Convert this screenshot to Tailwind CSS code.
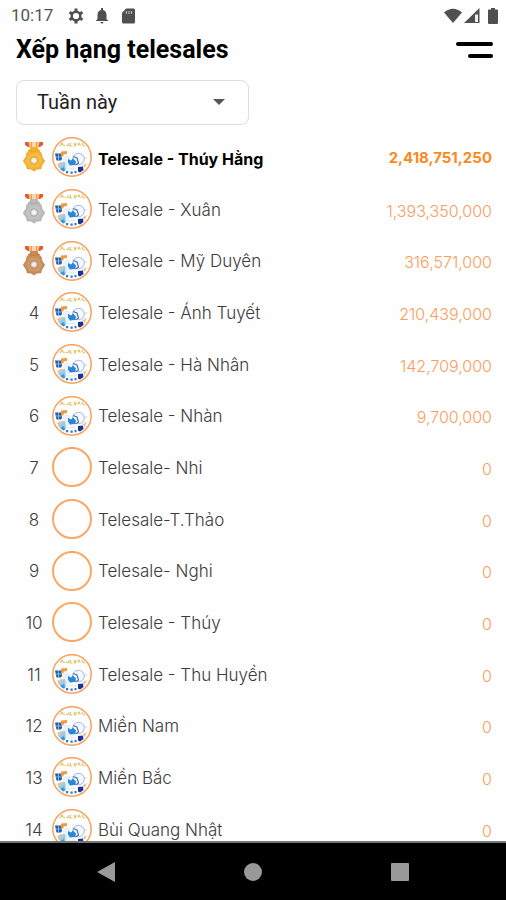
<!DOCTYPE html>
<html lang="vi">
<head>
<meta charset="utf-8">
<meta name="viewport" content="width=device-width, initial-scale=1">
<title>Xếp hạng telesales</title>
<script src="https://cdn.jsdelivr.net/npm/@tailwindcss/browser@4"></script>
</head>
<body class="flex h-screen flex-col overflow-hidden bg-[#fefefe] font-['Inter','Noto_Sans',sans-serif] text-black">

<svg class="hidden" aria-hidden="true">
  <symbol id="avatar" viewBox="0 0 40 40">
    <circle cx="20" cy="20" r="19.2" fill="#fff" stroke="#f9a05c" stroke-width="1.5"/>
    <path d="M8 9l2-3 1 2 2 .5M14 8.500h2l1-2M18.500 6l-.5 3h2.500M22 6l1 3 1.500-3M26 8.500l1-2.500 1.500 2.500M30 6l1 2.500 2 .5" fill="none" stroke="#dfc46a" stroke-width="1.200"/>
    <path d="M3 16.500h7V22l-1 1.500H4.500z" fill="#1c5fae"/>
    <path d="M3.500 20H10M6.500 16.500v7" stroke="#9fcaf0" stroke-width=".8"/>
    <path d="M9 14.500l6-.5v3l-3 .5-1 2H9z" fill="#f59a3c"/>
    <path d="M11 20l4-2 4 2 1 8-5 3-4-3z" fill="#eaf1f9"/>
    <circle cx="26.500" cy="22" r="5.800" fill="#f4f8fd" stroke="#9cb9e2" stroke-width="1"/>
    <path d="M16 22l3 1.500 2-2 3 3-1 3.500-5 .5-2-3z" fill="#2c86d6"/>
    <path d="M21 19.500l4 1.500 1.500 5-3 2" fill="none" stroke="#4a74b3" stroke-width="1.200"/>
    <circle cx="34" cy="21" r=".8" fill="#efb9a5"/>
    <path d="M6 30l1-4 6-1 1 8-3 1z" fill="#8fcdf0"/>
    <path d="M5 27l4-2 3 1-5 4z" fill="#e3c3a6"/>
    <path d="M8 32l4-2 1 4-2 .5z" fill="#3f97d8"/>
    <path d="M26 30l5-.5.5 3.500-3.500 2.500-2-1z" fill="#17359b"/>
    <path d="M31 28l4-2-2.500 5z" fill="#f3b98d"/>
    <path d="M14 34h2.200v2.200H14zM18.500 34.500h2.200v2.200h-2.200zM22.500 34h2v2.200h-2z" fill="#2d78cf"/>
    <path d="M15 30.500h9v2h-9z" fill="#e4eef9"/>
  </symbol>
  <symbol id="medal" viewBox="0 0 24 30">
    <path d="M3 0h18v3l-3 2H6L3 3z" fill="#e9553f"/>
    <path d="M6.500 0H9v5H7.500zM15 0h2.500l-1 5H15z" fill="#ffd24a"/>
    <path d="M9.500 0h5v5h-5z" fill="#f5d6bd"/>
    <path d="M8 5h8v2l2 1.500-1 1.500H7L6 8.500 8 7z" fill="currentColor"/>
    <path d="M7 8.500q5 2 10 0l2.500 2.500.5 3.500 3 4.500-3 4.500-1 3.500-4.500.5L12 29.500 9.500 27.500 5 27l-1-3.500L1 19l3-4.500.5-3.500z" fill="currentColor" stroke="#000" stroke-opacity=".12" stroke-width=".6"/>
    <path d="M7.500 11.500h9l4 7.500-4 6.500h-9L3.500 19z" fill="#fff" fill-opacity=".13"/>
    <circle cx="12" cy="18.500" r="3.600" fill="#fff" fill-opacity=".5" stroke="#000" stroke-opacity=".2"/>
    <circle cx="12" cy="18.500" r="1.700" fill="#fff" fill-opacity=".85"/>
  </symbol>
</svg>

<div class="flex h-8 shrink-0 items-center pr-2 pl-[11px] text-[#555]">
  <span class="w-[57px] font-['Roboto',sans-serif] text-[17px]">10:17</span>
  <svg class="size-4" viewBox="0 0 16 16" fill="none" stroke="#505050"><circle cx="8" cy="8" r="4.300" stroke-width="2.400"/><path d="M8 .5v3M8 12.500v3M1.500 4.200l2.600 1.500M11.900 10.300l2.600 1.500M14.500 4.200l-2.600 1.500M4.100 10.300l-2.600 1.500" stroke-width="3"/></svg>
  <svg class="ml-3 h-4 w-3" viewBox="0 0 12 16" fill="#505050"><path d="M5 0h2v2c2.500.5 3.500 2.500 3.500 5v4L12 12.500V13H0v-.5L1.500 11V7C1.500 4.500 2.500 2.500 5 2zM4.500 14h3a1.500 1.500 0 0 1-3 0z"/></svg>
  <svg class="ml-[14px] h-4 w-[13px]" viewBox="0 0 13 16"><path d="M4 .5h7.500q1.500 0 1.500 1.500v12q0 1.500-1.500 1.500h-10Q0 15.500 0 14V5z" fill="#505050"/><path d="M4.500 3v3M7 3v3M9.500 3v3" stroke="#b5b5b5" stroke-width="1.200"/></svg>
  <svg class="ml-auto h-4 w-[18px]" viewBox="0 0 18 16"><path d="M0 4.500Q9-3 18 4.500L9 15z" fill="#505050"/></svg>
  <svg class="ml-[2px] size-4" viewBox="0 0 16 16"><path d="M0 15L15.500 0v15z" fill="#505050"/><path d="M11 6.500h3V14h-3z" fill="#eee"/></svg>
  <svg class="ml-2 h-4 w-[10px]" viewBox="0 0 10 16" fill="#505050"><path d="M3 0h4v1.500h2q1 0 1 1V15q0 1-1 1H1q-1 0-1-1V2.500q0-1 1-1h2z"/></svg>
</div>

<header class="flex h-9 shrink-0 items-center justify-between pr-[13px] pl-4">
  <h1 class="font-['Roboto',sans-serif] text-[25px] leading-9 font-bold">Xếp hạng telesales</h1>
  <button type="button" aria-label="Menu" class="flex flex-col items-end gap-2">
    <span class="h-1 w-[37px] rounded-full bg-black"></span>
    <span class="h-1 w-[25px] rounded-full bg-black"></span>
  </button>
</header>

<div class="relative mt-3 ml-4 w-[233px] shrink-0 font-['Roboto',sans-serif]">
  <select aria-label="Khoảng thời gian" class="h-[45px] w-full appearance-none rounded-lg border border-[#dedede] bg-white pb-[2px] pl-5 text-[20px] text-[#222]">
    <option>Tuần này</option>
    <option>Tháng này</option>
  </select>
  <svg class="pointer-events-none absolute top-[19px] right-6 h-[6px] w-3" viewBox="0 0 12 6" fill="#555"><path d="M0 0h12L6 6z"/></svg>
</div>

<main class="mt-[6px] min-h-0 flex-1 overflow-hidden pr-[14px] pl-4">
  <table class="w-full border-collapse text-[17px] font-light text-[#3c3c3c]">
    <tbody id="ranking"></tbody>
  </table>
</main>

<nav class="flex h-[59px] shrink-0 items-center justify-around border-t-2 border-[#777] bg-black px-8" aria-label="Điều hướng">
  <button type="button" aria-label="Quay lại"><svg class="h-5 w-[18px]" viewBox="0 0 18 20" fill="#999"><path d="M18 0v20L0 10z"/></svg></button>
  <button type="button" aria-label="Trang chủ"><svg class="size-[18px]" viewBox="0 0 18 18" fill="#999"><circle cx="9" cy="9" r="9"/></svg></button>
  <button type="button" aria-label="Ứng dụng gần đây"><svg class="size-[18px]" viewBox="0 0 18 18" fill="#999"><rect width="18" height="18" rx="1"/></svg></button>
</nav>

<script>
const people = [
  ['Telesale - Thúy Hằng', '2,418,751,250', true],
  ['Telesale - Xuân', '1,393,350,000', true],
  ['Telesale - Mỹ Duyên', '316,571,000', true],
  ['Telesale - Ánh Tuyết', '210,439,000', true],
  ['Telesale - Hà Nhân', '142,709,000', true],
  ['Telesale - Nhàn', '9,700,000', true],
  ['Telesale- Nhi', '0', false],
  ['Telesale-T.Thảo', '0', false],
  ['Telesale- Nghi', '0', false],
  ['Telesale - Thúy', '0', false],
  ['Telesale - Thu Huyền', '0', true],
  ['Miền Nam', '0', true],
  ['Miền Bắc', '0', true],
  ['Bùi Quang Nhật', '0', true],
];
const medals = ['text-[#f6b129]', 'text-[#b9b9b9]', 'text-[#c98a55]'];
document.getElementById('ranking').innerHTML = people.map(([name, total, photo], i) => `
  <tr class="h-[52px] nth-[3n]:h-[51px] ${i === 0 ? 'text-[16px] font-bold text-black' : ''}">
    <td class="w-9 p-0 text-center ${i < 3 ? '' : 'pt-[3px]'}">${i < 3
      ? `<svg role="img" aria-label="Hạng ${i + 1}" class="mx-auto h-[30px] w-6 ${medals[i]}"><use href="#medal"/></svg>`
      : i + 1}</td>
    <td class="w-10 p-0">${photo
      ? '<svg class="size-10" aria-hidden="true"><use href="#avatar"/></svg>'
      : '<div class="size-10 rounded-full border-2 border-[#fba765]"></div>'}</td>
    <td class="p-0 pt-[3px] pl-[6px]">${name}</td>
    <td class="p-0 pt-[3px] text-right ${i === 0 ? 'text-[15px] text-[#fb8a1e]' : 'text-[16px] text-[#fb9d5c]'}">${total}</td>
  </tr>`).join('');
</script>
</body>
</html>
